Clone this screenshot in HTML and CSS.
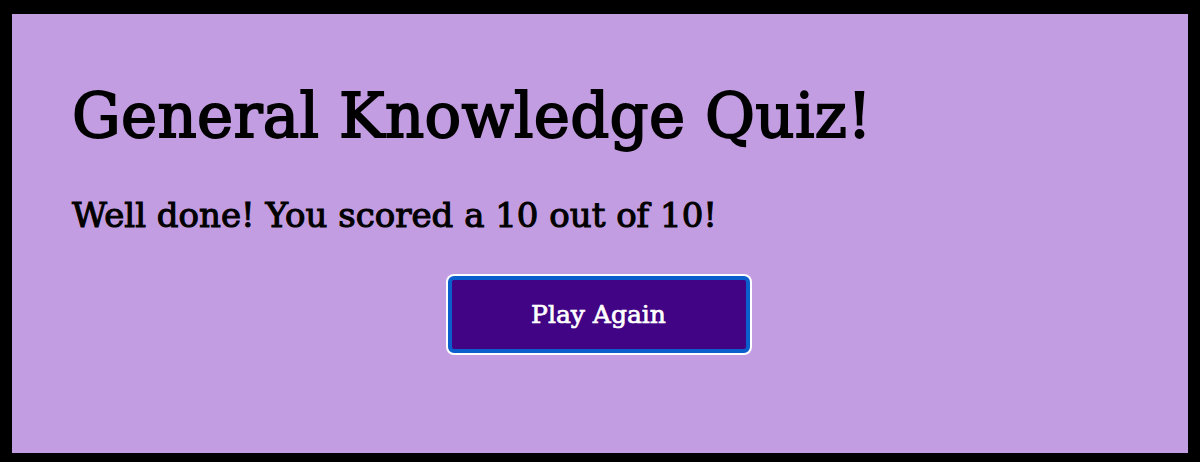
FILE: index.html
```html
<!DOCTYPE html>
<html lang="en">
<head>
<meta charset="utf-8">
<title>General Knowledge Quiz!</title>
<link rel="stylesheet" href="styles.css">
</head>
<body>
<main class="quiz">
  <h1 class="quiz-title">General Knowledge Quiz!</h1>
  <p class="quiz-result">Well done! You scored a 10 out of 10!</p>
  <div class="quiz-actions">
    <button class="play-btn" type="button">Play Again</button>
  </div>
</main>
</body>
</html>
```
FILE: styles.css
```css
html, body {
  margin: 0;
  padding: 0;
  background: #000;
  height: 462px;
  overflow: hidden;
}
body {
  padding: 14px 12px 0 12px;
  box-sizing: border-box;
  font-family: "DejaVu Serif", "Liberation Serif", serif;
}
.quiz {
  background: #c39de1;
  height: 439px;
  box-sizing: border-box;
  padding: 71px 60px 0 60px;
  color: #000;
}
.quiz-title {
  margin: 0;
  font-size: 61px;
  font-weight: 400;
  line-height: 1;
  letter-spacing: 0.3px;
  -webkit-text-stroke: 1.8px #000;
}
.quiz-result {
  margin: 52px 0 0 0;
  font-size: 34px;
  font-weight: 400;
  line-height: 1;
  -webkit-text-stroke: 1.1px #000;
}
.quiz-actions {
  display: flex;
  justify-content: center;
  margin-top: 44px;
  padding-right: 3px;
}
.play-btn {
  width: 302px;
  height: 77px;
  box-sizing: border-box;
  background: #410485;
  color: #fff;
  font-family: inherit;
  font-size: 25px;
  font-weight: 400;
  -webkit-text-stroke: 0.7px #fff;
  border: 4px solid #0a5fcc;
  border-radius: 6px;
  box-shadow: 0 0 0 2px #fff;
  outline: none;
  margin: 0;
  padding: 0;
}
```
